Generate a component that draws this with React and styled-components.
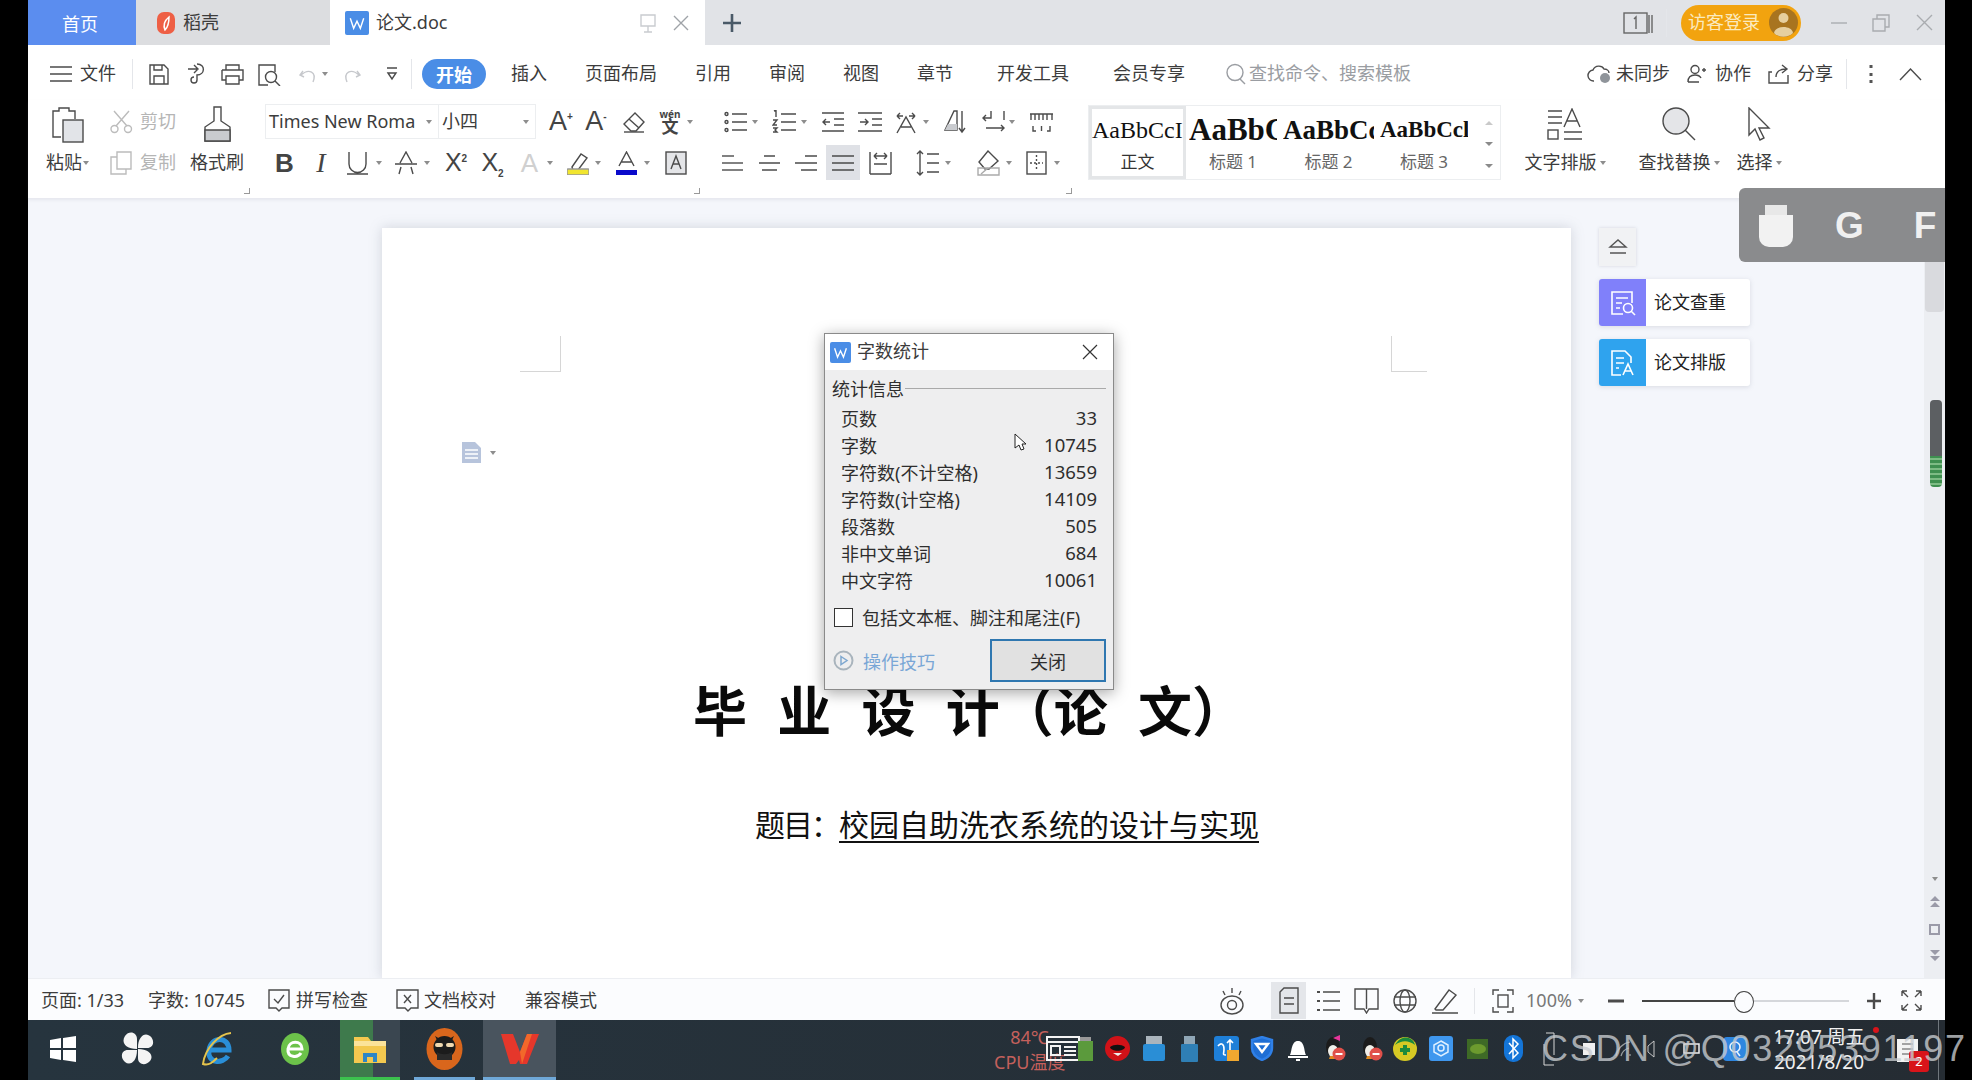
import React from 'react';
import styled, { createGlobalStyle } from 'styled-components';

const Global = createGlobalStyle`
    html, body { margin: 0; padding: 0; background: #000; }
    body { font-family: "Noto Sans", "Noto Sans CJK SC", sans-serif; color: #333; overflow: hidden; }
    * { box-sizing: border-box; }
`;

const Screen = styled.div`
    position: relative;
    width: 1972px;
    height: 1080px;
    background: #000;
    padding-left: 28px;
    overflow: hidden;
    font-size: 18px;
`;
const Window = styled.div`
    width: 1917px;
    height: 1080px;
    display: flex;
    flex-direction: column;
`;

/* ---- shared bits ---- */
const Svg = styled.svg`
    display: block;
    flex: none;
    fill: none;
    stroke: ${(p) => p.$c || '#4b4b4b'};
    stroke-width: ${(p) => p.$sw || 1.4};
    margin-left: ${(p) => p.$ml || 0}px;
    margin-top: ${(p) => p.$mt || 0}px;
`;
const Ic = ({ w, h, c, sw, ml, mt, children }) => (
    <Svg width={w} height={h} viewBox={`0 0 ${w} ${h}`} $c={c} $sw={sw} $ml={ml} $mt={mt}>
        {children}
    </Svg>
);
const Caret = styled.i`
    display: block;
    flex: none;
    width: 0;
    height: 0;
    margin-left: ${(p) => p.$ml || 0}px;
    margin-right: ${(p) => p.$mr || 0}px;
    border-left: 3.5px solid transparent;
    border-right: 3.5px solid transparent;
    border-top: 4px solid #8d8d8d;
`;
const Label = styled.span`
    flex: none;
    white-space: nowrap;
    line-height: 1.2;
    margin-left: ${(p) => p.$ml || 0}px;
    color: ${(p) => p.$c || '#3c3c3c'};
`;

/* ---- tab bar ---- */
const TabBar = styled.div`
    height: 45px;
    flex: none;
    display: flex;
    align-items: stretch;
    background: #e1e3e7;
`;
const HomeTab = styled.div`
    width: 108px;
    background: #5b8def;
    color: #fff;
    display: flex;
    align-items: center;
    padding: 1px 0 0 34px;
`;
const PlainTab = styled.div`
    width: 194px;
    background: #dcdde0;
    display: flex;
    align-items: center;
    padding: 1px 0 0 21px;
    gap: 8px;
`;
const ActiveTab = styled.div`
    width: 375px;
    background: #fff;
    display: flex;
    align-items: center;
    padding: 1px 0 0 15px;
    gap: 7px;
`;
const TabTools = styled.div`
    flex: 1;
    display: flex;
    align-items: center;
`;
const LoginPill = styled.div`
    width: 120px;
    height: 36px;
    margin-left: 14px;
    border-radius: 18px;
    background: #f2a30f;
    color: #fbeabf;
    display: flex;
    align-items: center;
    padding-left: 7px;
    gap: 9px;
`;
const Divider = styled.div`
    width: 1px;
    height: ${(p) => p.$h || 30}px;
    background: #e4e6ea;
    flex: none;
    margin-left: ${(p) => p.$ml || 0}px;
`;

/* ---- menu row ---- */
const MenuBar = styled.div`
    height: 55px;
    flex: none;
    background: #fff;
    display: flex;
    align-items: center;
    padding-top: 3px;
`;
const ActivePill = styled.div`
    width: 64px;
    height: 30px;
    margin-left: 10px;
    border-radius: 15px;
    background: #4a8de6;
    color: #fff;
    font-weight: 700;
    display: flex;
    align-items: center;
    justify-content: center;
`;

/* ---- ribbon ---- */
const Ribbon = styled.div`
    height: 98px;
    flex: none;
    background: #fff;
    display: flex;
    padding: 4px 0 0 18px;
    box-shadow: 0 2px 3px rgba(120, 125, 140, 0.12);
    position: relative;
    z-index: 1;
`;
const Group = styled.div`
    position: relative;
    display: flex;
    width: ${(p) => p.$w}px;
    height: 90px;
    flex: none;
    margin-left: ${(p) => p.$ml || 0}px;
`;
const Launcher = styled.i`
    position: absolute;
    right: 0;
    bottom: 0;
    width: 6px;
    height: 6px;
    border-right: 1px solid #999;
    border-bottom: 1px solid #999;
`;
const Stack = styled.div`
    display: grid;
    grid-template-rows: 35px 35px;
    row-gap: 6px;
    flex: none;
    width: ${(p) => (p.$w ? `${p.$w}px` : 'auto')};
    margin-left: ${(p) => p.$ml || 0}px;
`;
const Cell = styled.div`
    display: flex;
    align-items: center;
    justify-content: ${(p) => p.$j || 'flex-start'};
    white-space: nowrap;
`;
const Combo = styled.div`
    height: 35px;
    width: ${(p) => p.$w}px;
    flex: none;
    border: 1px solid #eceef0;
    margin-left: -1px;
    display: flex;
    align-items: center;
    justify-content: space-between;
    padding: 0 6px 0 3px;
    overflow: hidden;
    font-size: ${(p) => p.$fs || 18}px;
    color: #444;
`;
const BoldTool = styled.span`
    flex: none;
    width: ${(p) => p.$w}px;
    margin-left: ${(p) => p.$ml || 0}px;
    text-align: center;
    line-height: 1;
    font-family: ${(p) => (p.$it ? '"Liberation Serif", serif' : '"Liberation Sans", sans-serif')};
    font-size: ${(p) => p.$fs || 24}px;
    font-weight: ${(p) => p.$fw || 400};
    font-style: ${(p) => p.$it || 'normal'};
    color: ${(p) => p.$c || '#444'};
    sup, sub { font-size: 10px; line-height: 0; font-weight: 700; }
`;
const WenMark = styled.div`
    width: 22px;
    flex: none;
    margin-left: 13px;
    display: flex;
    flex-direction: column;
    align-items: center;
    font-size: 17px;
    line-height: 15px;
    font-weight: 700;
    color: #444;
    small {
        font-size: 10px;
        line-height: 10px;
    }
`;
const HighlightBtn = styled.div`
    width: 34px;
    height: 35px;
    flex: none;
    margin-left: 9px;
    background: #dfe1e6;
    display: flex;
    align-items: center;
    justify-content: center;
`;
const StylesBox = styled.div`
    width: 413px;
    height: 75px;
    margin: 1px 0 0 16px;
    flex: none;
    display: flex;
    border: 1px solid #eceef0;
`;
const StyleCell = styled.div`
    width: ${(p) => p.$w}px;
    flex: none;
    overflow: hidden;
    display: flex;
    flex-direction: column;
    align-items: center;
    padding-top: 1px;
    border: ${(p) => (p.$on ? '3px solid #e4e6e8' : '3px solid transparent')};
`;
const Sample = styled.div`
    height: 40px;
    line-height: 40px;
    white-space: nowrap;
    align-self: flex-start;
    font-family: "Liberation Serif", serif;
    font-size: ${(p) => p.$fs}px;
    font-weight: ${(p) => (p.$b ? 700 : 400)};
    color: #111;
`;
const StyleName = styled.div`
    font-size: 17px;
    line-height: 24px;
    color: ${(p) => p.$c || '#666'};
`;
const StyleScroll = styled.div`
    flex: 1;
    display: flex;
    flex-direction: column;
    align-items: center;
    justify-content: space-around;
    padding: 6px 0 2px 6px;
`;
const StyleArrow = styled.i`
    width: 0;
    height: 0;
    border-left: 4px solid transparent;
    border-right: 4px solid transparent;
    ${(p) => (p.$up ? 'border-bottom: 4px solid #c9c9c9;' : 'border-top: 4px solid #8a8a8a;')}
`;
const BigBtn = styled.div`
    width: ${(p) => p.$w}px;
    flex: none;
    margin-left: ${(p) => p.$ml || 0}px;
    display: grid;
    grid-template-rows: 35px 35px;
    row-gap: 6px;
    justify-items: center;
    align-items: center;
`;

/* ---- canvas ---- */
const Canvas = styled.div`
    flex: 1;
    min-height: 0;
    display: flex;
    background: #f4f6fb;
    overflow: hidden;
`;
const Page = styled.div`
    width: 1189px;
    margin: 30px 0 0 354px;
    flex: none;
    background: #fff;
    box-shadow: 0 0 12px rgba(120, 125, 140, 0.28);
    padding-top: 108px;
`;
const Corners = styled.div`
    display: flex;
    justify-content: space-between;
    padding: 0 144px 0 138px;
`;
const Corner = styled.i`
    display: block;
    width: ${(p) => (p.$right ? 36 : 41)}px;
    height: 36px;
    border-bottom: 1px solid #d6d6d6;
    ${(p) => (p.$right ? 'border-left: 1px solid #d6d6d6;' : 'border-right: 1px solid #d6d6d6;')}
`;
const DocMark = styled.div`
    display: flex;
    align-items: center;
    gap: 6px;
    margin: 70px 0 0 80px;
    height: 21px;
`;
const DocTitle = styled.h1`
    margin: 216px 0 0 311px;
    height: 60px;
    line-height: 60px;
    font-size: 54px;
    font-weight: 700;
    white-space: pre;
    word-spacing: 18px;
    color: #0a0a0a;
    font-family: "Noto Sans CJK SC", sans-serif;
`;
const DocSubject = styled.p`
    margin: 64px 0 0 373px;
    line-height: 40px;
    font-size: 30px;
    color: #111;
    font-family: "Noto Sans CJK SC", sans-serif;
    span { letter-spacing: -2px; }
    u { text-underline-offset: 5px; text-decoration-thickness: 2px; }
`;
const SideCol = styled.div`
    width: 151px;
    flex: none;
    margin: 30px 0 0 28px;
    display: flex;
    flex-direction: column;
    gap: 13px;
`;
const CollapseBtn = styled.div`
    width: 37px;
    height: 38px;
    background: #f1f2f4;
    box-shadow: 0 0 3px rgba(120, 125, 140, 0.25);
    display: flex;
    align-items: center;
    justify-content: center;
`;
const SideCard = styled.div`
    height: 47px;
    background: #fff;
    border-radius: 3px;
    box-shadow: 0 1px 5px rgba(120, 125, 140, 0.22);
    display: flex;
    align-items: center;
    color: #222;
    gap: 8px;
`;
const CardIcon = styled.div`
    width: 47px;
    height: 47px;
    border-radius: 3px 0 0 3px;
    background: ${(p) => p.$bg};
    display: flex;
    align-items: center;
    justify-content: center;
`;
const ScrollRail = styled.div`
    width: 21px;
    flex: none;
    margin-left: auto;
    background: #eceef2;
    display: flex;
    flex-direction: column;
    align-items: center;
`;
const ScrollThumb = styled.div`
    width: 19px;
    height: 102px;
    margin-top: 12px;
    background: #d9dade;
    border-radius: 0 0 4px 4px;
`;
const ChargeBar = styled.div`
    width: 12px;
    height: 87px;
    margin: 88px 0 0 3px;
    border-radius: 4px;
    background: linear-gradient(#5c5f62 0 64%, transparent 64%),
        repeating-linear-gradient(#3f8f50 0 3px, #7dbb84 3px 5px);
`;
const RailArrows = styled.div`
    margin-top: auto;
    height: 101px;
    padding-bottom: 16px;
    display: flex;
    flex-direction: column;
    justify-content: space-between;
    align-items: center;
    color: #9a9aa8;
`;

/* ---- floating ---- */
const UsbBar = styled.div`
    position: absolute;
    left: 1739px;
    top: 188px;
    width: 206px;
    height: 74px;
    z-index: 5;
    background: #8a8b8d;
    border-radius: 6px 0 0 6px;
    display: flex;
    align-items: center;
    padding: 2px 0 0 20px;
    color: #f0f0f0;
    font-family: "Liberation Sans", sans-serif;
    font-size: 37px;
    font-weight: 700;
`;
const Dialog = styled.div`
    position: absolute;
    left: 824px;
    top: 333px;
    width: 290px;
    height: 357px;
    z-index: 6;
    background: #eeeeef;
    border: 1px solid #8a8a8a;
    box-shadow: 0 3px 14px rgba(0, 0, 0, 0.35);
    color: #2e2e2e;
`;
const DialogHead = styled.div`
    height: 36px;
    background: #fff;
    display: flex;
    align-items: center;
    padding-left: 5px;
    gap: 6px;
`;
const DialogBody = styled.div`
    padding: 8px 7px 0;
`;
const Legend = styled.div`
    display: flex;
    align-items: center;
    height: 20px;
    gap: 1px;
    &::after {
        content: '';
        flex: 1;
        height: 1px;
        background: #a9a9a9;
    }
`;
const StatList = styled.div`
    margin-top: 6px;
    padding: 0 9px;
`;
const StatRow = styled.div`
    height: 27px;
    display: flex;
    align-items: center;
    justify-content: space-between;
    white-space: nowrap;
    b {
        font-weight: 400;
        font-size: 18.5px;
    }
`;
const CheckRow = styled.div`
    margin: 14px 0 0 2px;
    height: 20px;
    display: flex;
    align-items: center;
    gap: 9px;
    white-space: nowrap;
`;
const CheckBox = styled.i`
    width: 19px;
    height: 19px;
    background: #fff;
    border: 1px solid #333;
    flex: none;
`;
const DialogFoot = styled.div`
    margin-top: 12px;
    display: flex;
    align-items: center;
    justify-content: space-between;
    padding-left: 1px;
`;
const TipLink = styled.div`
    display: flex;
    align-items: center;
    gap: 9px;
    color: #79a6d6;
`;
const CloseBtn = styled.div`
    width: 116px;
    height: 43px;
    background: #e1e1e1;
    border: 2px solid #2f77b0;
    display: flex;
    align-items: center;
    justify-content: center;
`;
const Pointer = styled.div`
    position: absolute;
    left: 189px;
    top: 99px;
`;
const Watermark = styled.div`
    position: absolute;
    left: 1542px;
    top: 1026px;
    z-index: 7;
    white-space: nowrap;
    font-family: "Liberation Sans", sans-serif;
    font-size: 36px;
    line-height: 46px;
    letter-spacing: 1.7px;
    color: rgba(200, 204, 208, 0.78);
`;

/* ---- status + taskbar ---- */
const StatusBar = styled.div`
    height: 42px;
    flex: none;
    background: #fbfcfe;
    border-top: 1px solid #eceef2;
    display: flex;
    align-items: center;
    padding: 2px 0 0 13px;
`;
const ViewBtn = styled.div`
    width: 35px;
    height: 37px;
    margin-left: 26px;
    flex: none;
    background: #e4e6ea;
    display: flex;
    align-items: center;
    justify-content: center;
`;
const ZoomTrack = styled.div`
    width: 207px;
    height: 2px;
    margin-left: 18px;
    flex: none;
    position: relative;
    background: linear-gradient(90deg, #444 0 92px, #d5d7db 92px);
    &::after {
        content: '';
        position: absolute;
        left: 92px;
        top: -9px;
        width: 18px;
        height: 20px;
        border-radius: 50%;
        background: #fbfcfe;
        border: 1px solid #444;
    }
`;
const Taskbar = styled.div`
    height: 60px;
    flex: none;
    background: linear-gradient(90deg, #26343e, #252c33);
    display: flex;
    align-items: center;
    position: relative;
`;
const TaskSlot = styled.div`
    width: ${(p) => p.$w}px;
    height: 60px;
    flex: none;
    margin-left: ${(p) => p.$ml || 0}px;
    display: flex;
    align-items: center;
    justify-content: center;
    background: ${(p) => p.$bg || 'transparent'};
    border-bottom: 3px solid ${(p) => p.$bar || 'transparent'};
`;
const TempBlock = styled.div`
    margin-left: 438px;
    width: 71px;
    flex: none;
    color: #c4605c;
    font-size: 18px;
    line-height: 25px;
    text-align: center;
    white-space: nowrap;
`;
const Clock = styled.div`
    width: 92px;
    margin-left: 26px;
    flex: none;
    color: #f2f2f2;
    font-size: 19px;
    line-height: 25px;
    white-space: nowrap;
    text-align: center;
`;
const NotifyWrap = styled.div`
    position: relative;
    margin-left: 32px;
    flex: none;
`;
const Badge = styled.div`
    position: absolute;
    left: 12px;
    top: 12px;
    width: 20px;
    height: 21px;
    background: #d8141a;
    border-radius: 3px;
    color: #fff;
    font-size: 13px;
    line-height: 21px;
    text-align: center;
`;
const RedDot = styled.i`
    position: absolute;
    left: -24px;
    top: -12px;
    width: 6px;
    height: 6px;
    border-radius: 50%;
    background: #d8141a;
`;
const EdgeLine = styled.i`
    width: 1px;
    height: 60px;
    flex: none;
    margin-left: 20px;
    background: #70777d;
`;

const WpsIcon = ({ s = 23 }) => (
    <Ic w={s} h={s} c="#fff" sw={1.4}>
        <rect x="0" y="0" width={s} height={s} rx="2" fill="#4a8de6" stroke="none" />
        <path d={`M${s * 0.22} ${s * 0.3} L${s * 0.36} ${s * 0.72} L${s * 0.5} ${s * 0.42} L${s * 0.64} ${s * 0.72} L${s * 0.78} ${s * 0.3}`} />
    </Ic>
);

const Lines = ({ w = 22, xs, ys = [3, 11, 19] }) => (
    <Ic w={w} h={22}>
        {ys.map((y, i) => (
            <path key={y} d={`M${xs[i][0]} ${y} H${xs[i][1]}`} />
        ))}
    </Ic>
);

const Penguin = ({ bow }) => (
    <Ic w={23} h={28} c="none">
        <ellipse cx="10" cy="12" rx="7" ry="10" fill="#1b1b1b" />
        <ellipse cx="10" cy="16" rx="5" ry="6" fill="#f1efe9" />
        <path d="M6 24h8l-1-3H7z" fill="#e08a20" />
        <circle cx="16" cy="19" r="6.5" fill="#e0504a" />
        <path d="M12.5 19h7" stroke="#fff" strokeWidth="2" />
        {bow && <path d="M10 3l7-3v6z" fill="#e8359c" />}
    </Ic>
);

const stats = [
    ['页数', '33'],
    ['字数', '10745'],
    ['字符数(不计空格)', '13659'],
    ['字符数(计空格)', '14109'],
    ['段落数', '505'],
    ['非中文单词', '684'],
    ['中文字符', '10061'],
];

export default function App() {
    return (
        <Screen>
            <Global />
            <Window>
                <TabBar>
                    <HomeTab>首页</HomeTab>
                    <PlainTab>
                        <Ic w={18} h={22} c="#fff" sw={1.5}>
                            <rect width="18" height="22" rx="7" fill="#ee5f45" stroke="none" />
                            <path d="M12 5C7 9 6 13 8 18c3-3 4-8 4-13z" />
                        </Ic>
                        <Label>稻壳</Label>
                    </PlainTab>
                    <ActiveTab>
                        <WpsIcon s={24} />
                        <Label>论文.doc</Label>
                        <Ic w={18} h={22} c="#c9ccd0" ml={185}>
                            <path d="M2 3h14v11H2zM9 14v6M5 20h8" />
                        </Ic>
                        <Ic w={16} h={16} c="#9fa3a8" ml={9}>
                            <path d="M1 1l14 14M15 1L1 15" />
                        </Ic>
                    </ActiveTab>
                    <TabTools>
                        <Ic w={20} h={20} c="#4a5a68" sw={2.6} ml={17}>
                            <path d="M10 1v18M1 10h18" />
                        </Ic>
                        <Ic w={31} h={22} c="#666" ml={881}>
                            <rect x="1" y="1" width="23" height="20" />
                            <path d="M26 3v18M29 3v18" />
                            <path d="M11 7l2-2v12" />
                        </Ic>
                        <Divider $h={28} $ml={12} />
                        <LoginPill>
                            <Label $c="#fbeabf">访客登录</Label>
                            <Ic w={29} h={29} c="none">
                                <circle cx="14.5" cy="14.5" r="14.5" fill="#a8741f" />
                                <circle cx="14.5" cy="10" r="5" fill="#e6cf9f" />
                                <path d="M5 25c1-8 18-8 19 0-5 5-14 5-19 0z" fill="#e6cf9f" />
                            </Ic>
                        </LoginPill>
                        <Ic w={16} h={4} c="#a9acb0" ml={30}>
                            <path d="M0 2h16" />
                        </Ic>
                        <Ic w={18} h={18} c="#a9acb0" ml={25}>
                            <path d="M1 5h12v12H1zM5 5V1h12v12h-4" />
                        </Ic>
                        <Ic w={17} h={17} c="#a9acb0" ml={26}>
                            <path d="M1 1l15 15M16 1L1 16" />
                        </Ic>
                    </TabTools>
                </TabBar>

                <MenuBar>
                    <Ic w={22} h={16} ml={22}>
                        <path d="M0 1h22M0 8h22M0 15h22" />
                    </Ic>
                    <Label $ml={8}>文件</Label>
                    <Divider $ml={16} />
                    <Ic w={22} h={23} ml={15}>
                        <path d="M2 2h14l4 4v15H2zM6 21v-8h10v8M6 2v5h8V2" />
                    </Ic>
                    <Ic w={19} h={24} ml={17}>
                        <path d="M1 7h9M7 3l4 4-4 4M10 2c9 0 8 11 0 11v5a3 3 0 1 1-3-3" />
                    </Ic>
                    <Ic w={25} h={23} ml={14}>
                        <path d="M6 7V2h13v5M2 7h21v10h-4M6 17H2V7M6 13h13v8H6z" />
                    </Ic>
                    <Ic w={24} h={23} ml={12}>
                        <path d="M18 9V2H2v20h9" />
                        <circle cx="14" cy="14" r="5.5" />
                        <path d="M18 18l5 5" />
                    </Ic>
                    <Ic w={20} h={20} c="#c6c8cc" ml={17}>
                        <path d="M5 7l-3 4 4 2M3 11c8-7 16-3 12 7" />
                    </Ic>
                    <Caret $ml={4} />
                    <Ic w={19} h={20} c="#c6c8cc" ml={15}>
                        <path d="M14 7l3 4-4 2M16 11C8 4 0 8 4 18" />
                    </Ic>
                    <Ic w={12} h={14} ml={24}>
                        <path d="M1 1h10M2 6l4 6 4-6z" />
                    </Ic>
                    <Divider $ml={13} />
                    <ActivePill>开始</ActivePill>
                    <Label $ml={25}>插入</Label>
                    <Label $ml={38}>页面布局</Label>
                    <Label $ml={38}>引用</Label>
                    <Label $ml={38}>审阅</Label>
                    <Label $ml={38}>视图</Label>
                    <Label $ml={38}>章节</Label>
                    <Label $ml={44}>开发工具</Label>
                    <Label $ml={44}>会员专享</Label>
                    <Ic w={22} h={22} c="#9a9da2" ml={40}>
                        <circle cx="10" cy="9.5" r="8" />
                        <path d="M15 16l5 5" />
                    </Ic>
                    <Label $ml={2} $c="#9a9da2">查找命令、搜索模板</Label>
                    <Ic w={24} h={20} ml={176}>
                        <path d="M7 17a5.5 5.5 0 0 1-1-11c2-5 9-5 11-1 3 0 5 2 5 4" />
                        <circle cx="18" cy="14" r="5" fill="#8f949a" stroke="none" />
                    </Ic>
                    <Label $ml={5}>未同步</Label>
                    <Ic w={19} h={20} ml={17}>
                        <circle cx="8" cy="5.5" r="4" />
                        <path d="M1 18c0-6 4-7 7-7s5 1 6 3M1 18h11M15 6h4M17 4v4" />
                    </Ic>
                    <Label $ml={9}>协作</Label>
                    <Ic w={21} h={20} ml={17}>
                        <path d="M4 8H1v11h19v-8M8 13c0-5 4-8 10-8M14 1l5 4-5 4" />
                    </Ic>
                    <Label $ml={8}>分享</Label>
                    <Divider $ml={13} />
                    <Ic w={4} h={20} c="#555" sw={3} ml={22}>
                        <path d="M2 1v3M2 9v3M2 16v3" />
                    </Ic>
                    <Ic w={23} h={13} ml={26}>
                        <path d="M1 12L11.500 1 22 12" />
                    </Ic>
                </MenuBar>

                <Ribbon>
                    <Group $w={204}>
                        <Stack $w={44}>
                            <Cell $j="center">
                                <Ic w={32} h={36} mt={6}>
                                    <path d="M9 30H1V4h6V1h10v3h6v8" />
                                    <rect x="11" y="13" width="20" height="22" fill="#e2e4e8" />
                                </Ic>
                            </Cell>
                            <Cell>
                                <Label>粘贴</Label>
                                <Caret $ml={1} />
                            </Cell>
                        </Stack>
                        <Stack $w={68} $ml={20}>
                            <Cell>
                                <Ic w={23} h={24} c="#bcbcbc">
                                    <circle cx="4.500" cy="19" r="3.500" />
                                    <circle cx="18" cy="19" r="3.500" />
                                    <path d="M6 16L19 1M17 16L4 1" />
                                </Ic>
                                <Label $ml={7} $c="#b5b5b5">剪切</Label>
                            </Cell>
                            <Cell>
                                <Ic w={23} h={24} c="#bcbcbc">
                                    <path d="M7 1h14v17H7zM7 6H1v17h15v-5" />
                                </Ic>
                                <Label $ml={7} $c="#b5b5b5">复制</Label>
                            </Cell>
                        </Stack>
                        <Stack $w={52} $ml={12}>
                            <Cell $j="center">
                                <Ic w={29} h={36} mt={5}>
                                    <path d="M11 1h7v14l9 6v14H2V21l9-6z" />
                                    <path d="M2 24h25v11H2z" fill="#c9cbcf" />
                                </Ic>
                            </Cell>
                            <Cell>
                                <Label>格式刷</Label>
                            </Cell>
                        </Stack>
                        <Launcher />
                    </Group>

                    <Group $w={434} $ml={16}>
                        <Stack>
                            <Cell>
                                <Combo $w={174}>
                                    <Label>Times New Roma</Label>
                                    <Caret />
                                </Combo>
                                <Combo $w={98}>
                                    <Label>小四</Label>
                                    <Caret />
                                </Combo>
                                <BoldTool $w={23} $ml={13} $fs={27}>A<sup>+</sup></BoldTool>
                                <BoldTool $w={24} $ml={12} $fs={27}>A<sup>-</sup></BoldTool>
                                <Ic w={24} h={22} ml={14}>
                                    <path d="M2 13L13 2l9 9-8 9H9z" />
                                    <path d="M7 8l10 9" />
                                    <path d="M2 21h20" />
                                </Ic>
                                <WenMark>
                                    <small>wén</small>
                                    文
                                </WenMark>
                                <Caret $ml={6} />
                            </Cell>
                            <Cell>
                                <BoldTool $w={18} $ml={9} $fw={700} $fs={26}>B</BoldTool>
                                <BoldTool $w={12} $ml={22} $it="italic" $fs={28}>I</BoldTool>
                                <Ic w={21} h={24} ml={20}>
                                    <path d="M2 1v12a8.500 8.500 0 0 0 17 0V1M0 23h21" />
                                </Ic>
                                <Caret $ml={8} />
                                <Ic w={22} h={24} ml={13}>
                                    <path d="M5 12L11 1l6 11M0 13h22M4 23l2-7M18 23l-2-7" />
                                </Ic>
                                <Caret $ml={7} />
                                <BoldTool $w={24} $ml={14} $fs={25}>X<sup>2</sup></BoldTool>
                                <BoldTool $w={25} $ml={12} $fs={25}>X<sub>2</sub></BoldTool>
                                <BoldTool $w={21} $ml={14} $fs={26} $c="#d0d0d0">A</BoldTool>
                                <Caret $ml={7} />
                                <Ic w={22} h={24} ml={14}>
                                    <path d="M5 16L14 3l6 4-9 12H6z" />
                                    <rect x="0" y="18" width="22" height="6" rx="1" fill="#f1e52f" stroke="#999" />
                                </Ic>
                                <Caret $ml={6} />
                                <Ic w={21} h={24} ml={15}>
                                    <path d="M3 15L10.500 1 18 15M5 11h11" />
                                    <rect x="0" y="19" width="21" height="5" fill="#0a0acb" stroke="none" />
                                </Ic>
                                <Caret $ml={7} />
                                <Ic w={22} h={24} ml={15}>
                                    <rect x="1" y="1" width="20" height="22" fill="#e4e5e8" />
                                    <path d="M6 18l5-13 5 13M8 13h6" />
                                </Ic>
                            </Cell>
                        </Stack>
                        <Launcher />
                    </Group>

                    <Group $w={350} $ml={22}>
                        <Stack>
                            <Cell>
                                <Ic w={24} h={24} ml={2}>
                                    <path d="M8 4h15M8 12h15M8 20h15" />
                                    <circle cx="2.500" cy="4" r="1.500" />
                                    <circle cx="2.500" cy="12" r="1.500" />
                                    <circle cx="2.500" cy="20" r="1.500" />
                                </Ic>
                                <Caret $ml={4} />
                                <Ic w={24} h={24} ml={14}>
                                    <path d="M9 4h15M9 12h15M9 20h15M2 1l2-1v7M1 10h4l-4 5h4M1 18h4l-2 2 2 2H1" />
                                </Ic>
                                <Caret $ml={5} />
                                <Ic w={22} h={22} ml={15}>
                                    <path d="M0 2h22M12 8h10M12 14h10M0 20h22M8 11H1M4 8l-3 3 3 3" />
                                </Ic>
                                <Ic w={24} h={22} ml={14}>
                                    <path d="M0 2h24M14 8h10M14 14h10M0 20h24M2 11h8M7 8l3 3-3 3" />
                                </Ic>
                                <Ic w={24} h={24} ml={12}>
                                    <path d="M3 23L12 7l9 16M7 17h10M3 6h6M3 6l3-3M3 6l3 3M21 6h-6M21 6l-3-3M21 6l-3 3" />
                                </Ic>
                                <Caret $ml={5} />
                                <Ic w={22} h={26} ml={15}>
                                    <path d="M1 21L10 2h3v19zM1 21h12M18 2v21M15 19l3 4 3-4" />
                                    <path d="M4 15h9v6H1z" fill="#c9cbcf" stroke="none" />
                                </Ic>
                                <Ic w={23} h={24} ml={16}>
                                    <path d="M9 1v7H1M4 5L1 8l3 3M4 18h18M19 15l3 3-3 3M22 1v9" />
                                </Ic>
                                <Caret $ml={4} />
                                <Ic w={25} h={20} ml={14}>
                                    <path d="M1 2h23M2 2v6M6 2v6M10 2v6M14 2v6M18 2v6M23 2v6M4 14v5h3M12.500 14v5M21 14v5h-3" />
                                </Ic>
                            </Cell>
                            <Cell>
                                <Lines w={21} xs={[[0, 12], [0, 21], [0, 21]]} ys={[4, 11, 18]} />
                                <Ic w={21} h={22} ml={16}>
                                    <path d="M5 4h11M0 11h21M3 18h15" />
                                </Ic>
                                <Ic w={22} h={22} ml={15}>
                                    <path d="M10 4h12M0 11h22M6 18h16" />
                                </Ic>
                                <HighlightBtn>
                                    <Ic w={22} h={22}>
                                        <path d="M0 4h22M0 11h22M0 18h22" />
                                    </Ic>
                                </HighlightBtn>
                                <Ic w={23} h={24} ml={9}>
                                    <path d="M1 1v22M22 1v22M1 23h21M5 13h13M5 5h13M5 5l3-3M5 5l3 3M18 5l-3-3M18 5l-3 3" />
                                </Ic>
                                <Ic w={23} h={26} ml={24}>
                                    <path d="M4 1v24M1 4l3-3 3 3M1 22l3 3 3-3M11 4h12M11 13h12M11 22h12" />
                                </Ic>
                                <Caret $ml={6} />
                                <Ic w={23} h={26} ml={26}>
                                    <path d="M11 1l10 10-9 8H8L2 12z" />
                                    <path d="M1 18h21v7H1z" stroke="#aaa" />
                                    <path d="M4 24l7-6" stroke="#aaa" />
                                </Ic>
                                <Caret $ml={6} />
                                <Ic w={21} h={24} ml={14}>
                                    <rect x="1" y="1" width="19" height="22" />
                                    <path d="M10.500 4v16M4 12h13" strokeDasharray="2 2" />
                                </Ic>
                                <Caret $ml={7} />
                            </Cell>
                        </Stack>
                        <Launcher />
                    </Group>

                    <StylesBox>
                        <StyleCell $w={97} $on>
                            <Sample $fs={24}>AaBbCcI</Sample>
                            <StyleName $c="#333">正文</StyleName>
                        </StyleCell>
                        <StyleCell $w={94}>
                            <Sample $fs={31} $b>AaBbC</Sample>
                            <StyleName>标题 1</StyleName>
                        </StyleCell>
                        <StyleCell $w={97}>
                            <Sample $fs={27} $b>AaBbCc</Sample>
                            <StyleName>标题 2</StyleName>
                        </StyleCell>
                        <StyleCell $w={94}>
                            <Sample $fs={23} $b>AaBbCcl</Sample>
                            <StyleName>标题 3</StyleName>
                        </StyleCell>
                        <StyleScroll>
                            <StyleArrow $up />
                            <StyleArrow />
                            <StyleArrow />
                        </StyleScroll>
                    </StylesBox>

                    <BigBtn $w={86} $ml={21}>
                        <Ic w={36} h={33} mt={5}>
                            <path d="M1 3h14M1 9h14M1 15h14M17 19L25 1l8 18M20 13h10M17 24h18M17 31h18" />
                            <rect x="1" y="22" width="10" height="9" />
                        </Ic>
                        <Cell>
                            <Label>文字排版</Label>
                            <Caret $ml={3} />
                        </Cell>
                    </BigBtn>
                    <BigBtn $w={86} $ml={28}>
                        <Ic w={34} h={34} mt={5}>
                            <circle cx="14" cy="14" r="13" fill="#e4e5e8" />
                            <path d="M23 23l10 10" />
                        </Ic>
                        <Cell>
                            <Label>查找替换</Label>
                            <Caret $ml={3} />
                        </Cell>
                    </BigBtn>
                    <BigBtn $w={50} $ml={12}>
                        <Ic w={24} h={34} mt={5}>
                            <path d="M2 1v27l6-6 5 11 4-2-5-10h10z" />
                        </Ic>
                        <Cell>
                            <Label>选择</Label>
                            <Caret $ml={3} />
                        </Cell>
                    </BigBtn>
                </Ribbon>

                <Canvas>
                    <Page>
                        <Corners>
                            <Corner />
                            <Corner $right />
                        </Corners>
                        <DocMark>
                            <Ic w={19} h={21} c="#fff">
                                <path d="M0 0h13l6 6v15H0z" fill="#b7c4dc" stroke="none" />
                                <path d="M3 8h13M3 12h13M3 16h13" />
                            </Ic>
                            <Caret $ml={3} />
                        </DocMark>
                        <DocTitle>毕 业 设 计（论 文）</DocTitle>
                        <DocSubject>
                            <span>题目：</span>
                            <u>校园自助洗衣系统的设计与实现</u>
                        </DocSubject>
                    </Page>
                    <SideCol>
                        <CollapseBtn>
                            <Ic w={20} h={18} c="#555">
                                <path d="M2 9L10 2l8 7zM2 15h16" />
                            </Ic>
                        </CollapseBtn>
                        <SideCard>
                            <CardIcon $bg="#8080fa">
                                <Ic w={26} h={26} c="#fff" sw={1.6}>
                                    <path d="M13 24H2V2h20v11M6 8h12M6 13h6M6 18h4" />
                                    <circle cx="18" cy="18" r="4.500" />
                                    <path d="M21 21l4 4" />
                                </Ic>
                            </CardIcon>
                            <Label $c="#222">论文查重</Label>
                        </SideCard>
                        <SideCard>
                            <CardIcon $bg="#2fa3ee">
                                <Ic w={26} h={28} c="#fff" sw={1.6}>
                                    <path d="M11 26H2V2h13l6 6v6M6 9h8M6 14h8M6 19h3M13 26l5-11 5 11M15 22h6" />
                                </Ic>
                            </CardIcon>
                            <Label $c="#222">论文排版</Label>
                        </SideCard>
                    </SideCol>
                    <ScrollRail>
                        <ScrollThumb />
                        <ChargeBar />
                        <RailArrows>
                            <Caret />
                            <Ic w={12} h={12} c="none">
                                <path d="M6 0l5 5H1zM6 6l5 5H1z" fill="#9a9aa8" />
                            </Ic>
                            <Ic w={11} h={11} c="#9a9aa8" sw={2}>
                                <rect x="1" y="1" width="9" height="9" />
                            </Ic>
                            <Ic w={12} h={12} c="none">
                                <path d="M1 0h10L6 5zM1 6h10l-5 5z" fill="#9a9aa8" />
                            </Ic>
                        </RailArrows>
                    </ScrollRail>
                </Canvas>

                <StatusBar>
                    <Label>页面: 1/33</Label>
                    <Label $ml={24}>字数: 10745</Label>
                    <Ic w={22} h={26} ml={23}>
                        <path d="M1 2h20v18h-7l-3 3-3-3H1zM6 11l4 4 6-8" />
                    </Ic>
                    <Label $ml={6}>拼写检查</Label>
                    <Ic w={23} h={26} ml={28}>
                        <path d="M1 2h21v18h-7l-3 3-3-3H1zM8 7l7 8M15 7l-7 8" />
                    </Ic>
                    <Label $ml={5}>文档校对</Label>
                    <Label $ml={29}>兼容模式</Label>
                    <Ic w={26} h={28} ml={622}>
                        <ellipse cx="13" cy="18" rx="11" ry="9" />
                        <circle cx="13" cy="18" r="4.500" />
                        <path d="M13 1v5M4 4l2 4M22 4l-2 4" />
                    </Ic>
                    <ViewBtn>
                        <Ic w={20} h={27}>
                            <path d="M1 5l4-4h14v25H1zM5 11h10M5 17h10" />
                        </Ic>
                    </ViewBtn>
                    <Ic w={23} h={24} ml={11}>
                        <path d="M6 3h17M6 12h17M6 21h17" />
                        <path d="M0 3h3M0 12h3M0 21h3" strokeWidth="2" />
                    </Ic>
                    <Ic w={25} h={27} ml={14}>
                        <path d="M1 2h23v20H15l-2.500 4L10 22H1zM12.500 2v20" />
                    </Ic>
                    <Ic w={24} h={24} ml={14}>
                        <circle cx="12" cy="12" r="11" />
                        <ellipse cx="12" cy="12" rx="5" ry="11" />
                        <path d="M1 8h22M1 16h22" />
                    </Ic>
                    <Ic w={26} h={26} ml={15}>
                        <path d="M3 21L17 2l7 5-13 15H4zM0 25h26" />
                    </Ic>
                    <Divider $h={26} $ml={16} />
                    <Ic w={22} h={24} ml={17}>
                        <path d="M1 6V1h6M15 1h6v5M21 18v5h-6M7 23H1v-5" />
                        <rect x="6" y="6" width="10" height="12" />
                    </Ic>
                    <Label $ml={12} $c="#777">100%</Label>
                    <Caret $ml={6} />
                    <Ic w={16} h={4} sw={3} ml={24}>
                        <path d="M0 2h16" />
                    </Ic>
                    <ZoomTrack />
                    <Ic w={14} h={16} sw={2.4} ml={18}>
                        <path d="M0 8h14M7 0v16" />
                    </Ic>
                    <Ic w={23} h={23} ml={19}>
                        <path d="M2 2l6 6M2 2v5M2 2h5M21 2l-6 6M21 2v5M21 2h-5M2 21l6-6M2 21v-5M2 21h5M21 21l-6-6M21 21v-5M21 21h-5" />
                    </Ic>
                </StatusBar>

                <Taskbar>
                    <TaskSlot $w={26} $ml={22}>
                        <Ic w={26} h={26} c="none">
                            <path d="M0 4l11-2v10H0zM13 2l13-2v12H13zM0 14h11v10L0 22zM13 14h13v12l-13-2z" fill="#fff" />
                        </Ic>
                    </TaskSlot>
                    <TaskSlot $w={33} $ml={45}>
                        <Ic w={33} h={34} c="none">
                            <path d="M16 17C4 17 0 10 4 4s12-4 12 3zM17 16C17 4 24 0 29 4s4 12-3 12zM16 18c0 12-7 16-12 12S0 18 7 18zM17 17c12 0 16 7 12 12s-12 4-12-3z" fill="#f4f4f4" />
                        </Ic>
                    </TaskSlot>
                    <TaskSlot $w={36} $ml={47}>
                        <Ic w={36} h={38} c="#2a8fd8" sw={5}>
                            <path d="M8 20h20c0-14-18-14-20 0s14 14 19 6" />
                            <path d="M30 3C18 4 4 18 2 34c6 2 10-2 14-6" stroke="#e6c44c" strokeWidth="2" />
                        </Ic>
                    </TaskSlot>
                    <TaskSlot $w={33} $ml={42}>
                        <Ic w={33} h={36} c="#fff" sw={3}>
                            <ellipse cx="16" cy="18" rx="14" ry="16" fill="#6cc24a" stroke="none" />
                            <path d="M9 18h14c0-9-13-9-14 0s10 9 13 4" />
                        </Ic>
                    </TaskSlot>
                    <TaskSlot $w={60} $ml={28} $bg="linear-gradient(90deg,#3e7a4c 0 55%,#3a4650 55%)" $bar="#3cc24e">
                        <Ic w={32} h={28} c="none">
                            <path d="M0 2h14l3 4h15v22H0z" fill="#f3c84f" />
                            <path d="M0 6h32v5H0z" fill="#fbe39a" />
                            <path d="M9 27v-9h14v9h-4v-5h-6v5z" fill="#2d86c4" />
                        </Ic>
                    </TaskSlot>
                    <TaskSlot $w={61} $ml={14} $bar="#6fa8d8">
                        <Ic w={37} h={42} c="none">
                            <ellipse cx="18.500" cy="21" rx="18" ry="21" fill="#d9661c" />
                            <circle cx="18.500" cy="19" r="11" fill="#1c1c1c" />
                            <path d="M9 8l3 6h13l3-6-5 3h-9z" fill="#1c1c1c" />
                            <rect x="9" y="15" width="8" height="4" rx="2" fill="#f0d9b0" />
                            <rect x="20" y="15" width="8" height="4" rx="2" fill="#f0d9b0" />
                            <path d="M11 24c4 3 11 3 15 0v8H11z" fill="#2a2a2a" />
                        </Ic>
                    </TaskSlot>
                    <TaskSlot $w={73} $ml={8} $bg="#49545e" $bar="#6fa8d8">
                        <Ic w={38} h={36} c="none">
                            <path d="M0 3h12l7 18 7-18h12L26 33h-7l-1-4-3 4H9z" fill="#e5372b" />
                            <path d="M19 21l7-18h5L21 33z" fill="#f2682a" />
                        </Ic>
                    </TaskSlot>

                    <TempBlock>
                        84℃
                        <br />
                        CPU温度
                    </TempBlock>
                    <TaskSlot $w={34} $ml={-19}>
                        <Ic w={34} h={25} c="#f3f3f3" sw={2}>
                            <rect x="1" y="1" width="32" height="23" />
                            <path d="M1 6h32M5 10h9v9H5zM18 11h12M18 15h12M18 19h12" />
                        </Ic>
                    </TaskSlot>
                    <TaskSlot $w={15} $ml={-2}>
                        <Ic w={15} h={24} c="none">
                            <rect y="4" width="15" height="20" fill="#5b9a3c" />
                            <path d="M2 0h11v4H2z" fill="#999" />
                        </Ic>
                    </TaskSlot>
                    <TaskSlot $w={25} $ml={12}>
                        <Ic w={25} h={25} c="none">
                            <circle cx="12.500" cy="12.500" r="12.500" fill="#d01218" />
                            <path d="M5 11c4-3 11-3 15 0-1 5-14 5-15 0z" fill="#111" />
                            <path d="M8 17h9l-4 3z" fill="#eee" />
                        </Ic>
                    </TaskSlot>
                    <TaskSlot $w={22} $ml={13}>
                        <Ic w={22} h={25} c="none">
                            <rect y="8" width="22" height="17" rx="2" fill="#2a8ed6" />
                            <rect x="3" y="0" width="16" height="8" fill="#aab4bc" />
                        </Ic>
                    </TaskSlot>
                    <TaskSlot $w={17} $ml={16}>
                        <Ic w={17} h={26} c="none">
                            <rect y="8" width="17" height="18" rx="1" fill="#2f7fb5" />
                            <rect x="3" y="0" width="11" height="8" fill="#8fa6b6" />
                        </Ic>
                    </TaskSlot>
                    <TaskSlot $w={25} $ml={16}>
                        <Ic w={25} h={25} c="#fff" sw={1.6}>
                            <rect width="25" height="25" rx="3" fill="#1e7fd8" stroke="none" />
                            <path d="M4 10c3-4 6-2 6 3s-2 6 2 6M16 4v10M13 7l3-3 3 3" />
                            <rect x="13" y="14" width="12" height="11" fill="#f0a830" stroke="none" />
                        </Ic>
                    </TaskSlot>
                    <TaskSlot $w={24} $ml={11}>
                        <Ic w={24} h={25} c="#fff" sw={2.4}>
                            <path d="M12 1l10 3v8c0 6-5 10-10 12C7 22 2 18 2 12V4z" fill="#1f6ed4" stroke="#2f80e8" />
                            <path d="M6 8h12l-6 8z" />
                        </Ic>
                    </TaskSlot>
                    <TaskSlot $w={22} $ml={13}>
                        <Ic w={22} h={24} c="none">
                            <path d="M3 18c2-3 1-14 8-14s6 11 8 14zM1 19h20v2H1zM9 22h4v2H9z" fill="#fff" />
                        </Ic>
                    </TaskSlot>
                    <TaskSlot $w={23} $ml={14}>
                        <Penguin bow />
                    </TaskSlot>
                    <TaskSlot $w={23} $ml={14}>
                        <Penguin />
                    </TaskSlot>
                    <TaskSlot $w={24} $ml={10}>
                        <Ic w={24} h={24} c="none">
                            <circle cx="12" cy="12" r="12" fill="#d6c924" />
                            <path d="M2 8C8-3 20-1 22 8 15 3 9 3 2 8z" fill="#1c8a3c" />
                            <path d="M10 8h4v3h3v4h-3v3h-4v-3H7v-4h3z" fill="#1c8a3c" />
                        </Ic>
                    </TaskSlot>
                    <TaskSlot $w={24} $ml={12}>
                        <Ic w={24} h={25} c="#dff0ff" sw={1.5}>
                            <rect width="24" height="25" rx="3" fill="#3f97ee" stroke="none" />
                            <path d="M12 5l7 4v7l-7 4-7-4V9z" />
                            <circle cx="12" cy="12" r="3" />
                        </Ic>
                    </TaskSlot>
                    <TaskSlot $w={21} $ml={14}>
                        <Ic w={21} h={20} c="none">
                            <rect width="21" height="20" fill="#3e6a26" />
                            <ellipse cx="11" cy="10" rx="8" ry="5" fill="#6c9a2e" />
                        </Ic>
                    </TaskSlot>
                    <TaskSlot $w={19} $ml={16}>
                        <Ic w={19} h={27} c="#fff" sw={1.5}>
                            <rect width="19" height="27" rx="9" fill="#1475d8" stroke="none" />
                            <path d="M5 8l9 10-5 5V4l5 5-9 10" />
                        </Ic>
                    </TaskSlot>
                    <TaskSlot $w={12} $ml={20}>
                        <Ic w={12} h={34} c="#d8d8d8" sw={1}>
                            <path d="M3 1h8v22M1 12v21h10" />
                        </Ic>
                    </TaskSlot>
                    <TaskSlot $w={12} $ml={28}>
                        <Ic w={12} h={12} c="none">
                            <rect width="12" height="12" fill="#f0f0f0" />
                        </Ic>
                    </TaskSlot>
                    <TaskSlot $w={17} $ml={20}>
                        <Ic w={17} h={16} c="#9aa0a4" sw={1.2}>
                            <path d="M1 15C2 8 8 2 15 1M6 15c1-4 4-7 8-8M15 13v2" />
                        </Ic>
                    </TaskSlot>
                    <TaskSlot $w={8} $ml={15}>
                        <Ic w={8} h={18} c="#c8c8c8" sw={1}>
                            <path d="M7 1L1 6v6l6 5z" />
                        </Ic>
                    </TaskSlot>
                    <TaskSlot $w={17} $ml={28}>
                        <Ic w={17} h={11} c="#f0f0f0" sw={1.5}>
                            <rect x="1" y="1" width="15" height="9" />
                        </Ic>
                    </TaskSlot>
                    <TaskSlot $w={24} $ml={23}>
                        <Ic w={24} h={24} c="#e8f3ff" sw={1.6}>
                            <rect width="24" height="24" rx="4" fill="#2f86e0" stroke="none" />
                            <circle cx="12" cy="10" r="5" />
                            <path d="M14 15l3 4" />
                        </Ic>
                    </TaskSlot>
                    <Clock>
                        17:07 周五
                        <br />
                        2021/8/20
                    </Clock>
                    <NotifyWrap>
                        <RedDot />
                        <Ic w={21} h={23} c="#fff" sw={1.2}>
                            <rect width="21" height="23" fill="#f3f3f3" stroke="none" />
                            <path d="M5 5h11M5 10h11M5 15h11" stroke="#555" />
                        </Ic>
                        <Badge>2</Badge>
                    </NotifyWrap>
                    <EdgeLine />
                </Taskbar>
            </Window>

            <UsbBar>
                <Ic w={34} h={42} c="none">
                    <path d="M6 0h22v10H6z" fill="#e8e8e8" />
                    <path d="M0 10h34v22a10 10 0 0 1-10 10H10A10 10 0 0 1 0 32z" fill="#f2f2f2" />
                </Ic>
                <Label $ml={42} $c="#f0f0f0">G</Label>
                <Label $ml={50} $c="#f0f0f0">F</Label>
            </UsbBar>

            <Dialog>
                <DialogHead>
                    <WpsIcon s={21} />
                    <Label>字数统计</Label>
                    <Ic w={16} h={16} c="#333" sw={1.2} ml={147}>
                        <path d="M1 1l14 14M15 1L1 15" />
                    </Ic>
                </DialogHead>
                <DialogBody>
                    <Legend>统计信息</Legend>
                    <StatList>
                        {stats.map(([name, value]) => (
                            <StatRow key={name}>
                                <span>{name}</span>
                                <b>{value}</b>
                            </StatRow>
                        ))}
                    </StatList>
                    <CheckRow>
                        <CheckBox />
                        包括文本框、脚注和尾注(F)
                    </CheckRow>
                    <DialogFoot>
                        <TipLink>
                            <Ic w={21} h={21} c="#a9b4bd" sw={2}>
                                <circle cx="10.500" cy="10.500" r="9" />
                                <path d="M8 6.500l6 4-6 4z" stroke="#7fa8d0" strokeWidth="1.500" />
                            </Ic>
                            操作技巧
                        </TipLink>
                        <CloseBtn>关闭</CloseBtn>
                    </DialogFoot>
                </DialogBody>
                <Pointer>
                    <Ic w={13} h={19} c="#222" sw={1}>
                        <path d="M1 1v14l4-3 2 5 3-1-2-5h4z" fill="#fff" />
                    </Ic>
                </Pointer>
            </Dialog>

            <Watermark>CSDN @Q03295391197</Watermark>
        </Screen>
    );
}
